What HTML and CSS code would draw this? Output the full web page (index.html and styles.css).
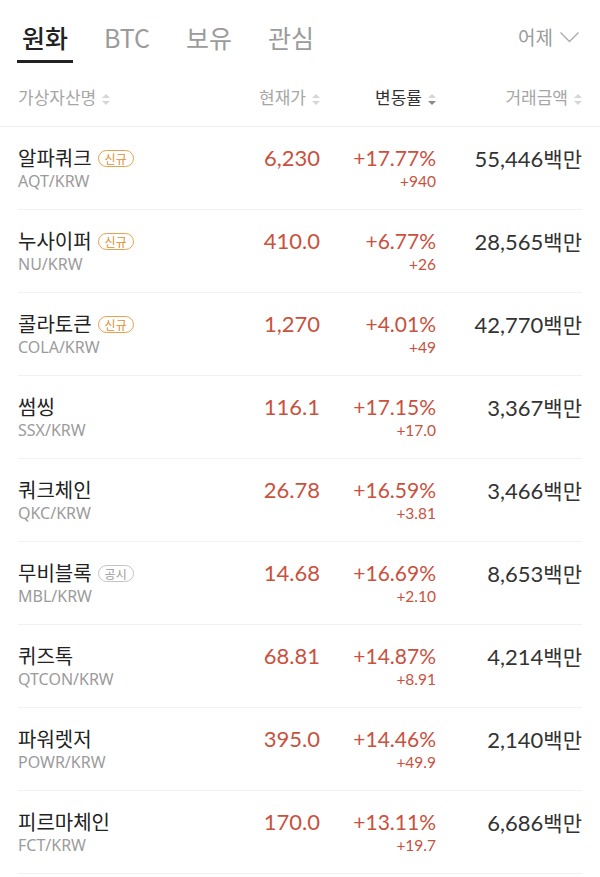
FILE: index.html
```html
<!DOCTYPE html>
<html lang="ko">
<head>
<meta charset="UTF-8" />
<meta name="viewport" content="width=device-width, initial-scale=1" />
<title>거래소</title>
<link rel="stylesheet" href="styles.css">
</head>
<body>

<div class="tabs">
  <a class="tab active" href="#">원화</a>
  <a class="tab" href="#">BTC</a>
  <a class="tab" href="#">보유</a>
  <a class="tab" href="#">관심</a>
  <div class="period">어제
    <svg width="21" height="12" viewBox="0 0 21 12"><path d="M1.5 1.5 L10.5 10.5 L19.5 1.5" fill="none" stroke="#aaa" stroke-width="1.3"/></svg>
  </div>
</div>

<div class="head">
  <div class="col-name">가상자산명<span class="sort"></span></div>
  <div class="col-num">현재가<span class="sort"></span></div>
  <div class="col-num on">변동률<span class="sort down"></span></div>
  <div class="col-num">거래금액<span class="sort"></span></div>
</div>

<div class="list">
  <div class="row">
    <div class="name"><div class="kr">알파쿼크 <span class="badge new">신규</span></div><div class="sym">AQT/KRW</div></div>
    <div class="price">6,230</div>
    <div class="change"><div class="rate">+17.77%</div><div class="diff">+940</div></div>
    <div class="vol">55,446<span class="unit">백만</span></div>
  </div>
  <div class="row">
    <div class="name"><div class="kr">누사이퍼 <span class="badge new">신규</span></div><div class="sym">NU/KRW</div></div>
    <div class="price">410.0</div>
    <div class="change"><div class="rate">+6.77%</div><div class="diff">+26</div></div>
    <div class="vol">28,565<span class="unit">백만</span></div>
  </div>
  <div class="row">
    <div class="name"><div class="kr">콜라토큰 <span class="badge new">신규</span></div><div class="sym">COLA/KRW</div></div>
    <div class="price">1,270</div>
    <div class="change"><div class="rate">+4.01%</div><div class="diff">+49</div></div>
    <div class="vol">42,770<span class="unit">백만</span></div>
  </div>
  <div class="row">
    <div class="name"><div class="kr">썸씽</div><div class="sym">SSX/KRW</div></div>
    <div class="price">116.1</div>
    <div class="change"><div class="rate">+17.15%</div><div class="diff">+17.0</div></div>
    <div class="vol">3,367<span class="unit">백만</span></div>
  </div>
  <div class="row">
    <div class="name"><div class="kr">쿼크체인</div><div class="sym">QKC/KRW</div></div>
    <div class="price">26.78</div>
    <div class="change"><div class="rate">+16.59%</div><div class="diff">+3.81</div></div>
    <div class="vol">3,466<span class="unit">백만</span></div>
  </div>
  <div class="row">
    <div class="name"><div class="kr">무비블록 <span class="badge notice">공시</span></div><div class="sym">MBL/KRW</div></div>
    <div class="price">14.68</div>
    <div class="change"><div class="rate">+16.69%</div><div class="diff">+2.10</div></div>
    <div class="vol">8,653<span class="unit">백만</span></div>
  </div>
  <div class="row">
    <div class="name"><div class="kr">퀴즈톡</div><div class="sym">QTCON/KRW</div></div>
    <div class="price">68.81</div>
    <div class="change"><div class="rate">+14.87%</div><div class="diff">+8.91</div></div>
    <div class="vol">4,214<span class="unit">백만</span></div>
  </div>
  <div class="row">
    <div class="name"><div class="kr">파워렛저</div><div class="sym">POWR/KRW</div></div>
    <div class="price">395.0</div>
    <div class="change"><div class="rate">+14.46%</div><div class="diff">+49.9</div></div>
    <div class="vol">2,140<span class="unit">백만</span></div>
  </div>
  <div class="row">
    <div class="name"><div class="kr">피르마체인</div><div class="sym">FCT/KRW</div></div>
    <div class="price">170.0</div>
    <div class="change"><div class="rate">+13.11%</div><div class="diff">+19.7</div></div>
    <div class="vol">6,686<span class="unit">백만</span></div>
  </div>
</div>

</body>
</html>
```

FILE: styles.css
```css
body { margin: 0; background: #fff; font-family: "Noto Sans CJK KR", sans-serif; color: #222; }

.tabs { display: flex; align-items: flex-end; padding: 0 20px 0 17px; gap: 26px; height: 63px; }
.tab {
  font-size: 25px; line-height: 34px; padding: 20px 5px 6px; color: #9b9b9b;
  text-decoration: none; border-bottom: 3px solid transparent;
}
.tab.active { color: #222; font-weight: 500; border-bottom-color: #222; }
.period {
  margin-left: auto; align-self: center; margin-top: 10px;
  font-size: 19px; color: #9b9b9b; display: flex; align-items: center; gap: 6px;
}

.head, .row { display: grid; grid-template-columns: 1fr 110px 116px 146px; }
.head {
  padding: 24px 18px 19px; line-height: 20px; font-size: 17px; color: #a6a6a6;
  border-bottom: 1px solid #eee;
}
.head .col-num { text-align: right; }
.head .on { color: #333; }
.sort { display: inline-block; position: relative; width: 8px; height: 11px; margin-left: 6px; vertical-align: -1px; }
.sort::before, .sort::after {
  content: ""; position: absolute; left: 0;
  border-left: 4px solid transparent; border-right: 4px solid transparent;
}
.sort::before { top: 0; border-bottom: 4.5px solid #d6d6d6; }
.sort::after { bottom: 0; border-top: 4.5px solid #d6d6d6; }
.sort.down::after { border-top-color: #8a8a8a; }

.list { padding: 0 18px; }
.row { padding: 19px 0 17px; border-bottom: 1px solid #f2f2f2; height: 46px; }
.kr { font-size: 20px; line-height: 24px; color: #222; display: flex; align-items: center; gap: 6px; }
.sym { font-family: "Noto Sans", sans-serif; font-size: 16px; line-height: 22px; color: #9b9b9b; }
.badge {
  font-size: 12px; line-height: 15px; padding: 0 6px; border-radius: 9px; border: 1.5px solid;
}
.badge.new { color: #e0902f; border-color: #e6a050; }
.badge.notice { color: #999; border-color: #c4c4c4; }

.price, .change, .vol { text-align: right; font-family: Lato, "Noto Sans CJK KR", sans-serif; }
.price { font-size: 22px; line-height: 24px; color: #c9513e; }
.rate { font-size: 21px; line-height: 24px; color: #c9513e; }
.diff { font-size: 15.5px; line-height: 22px; color: #c9513e; }
.vol { font-size: 22px; line-height: 24px; color: #333; }
.unit { font-family: "Noto Sans CJK KR", sans-serif; font-size: 21px; }
```
